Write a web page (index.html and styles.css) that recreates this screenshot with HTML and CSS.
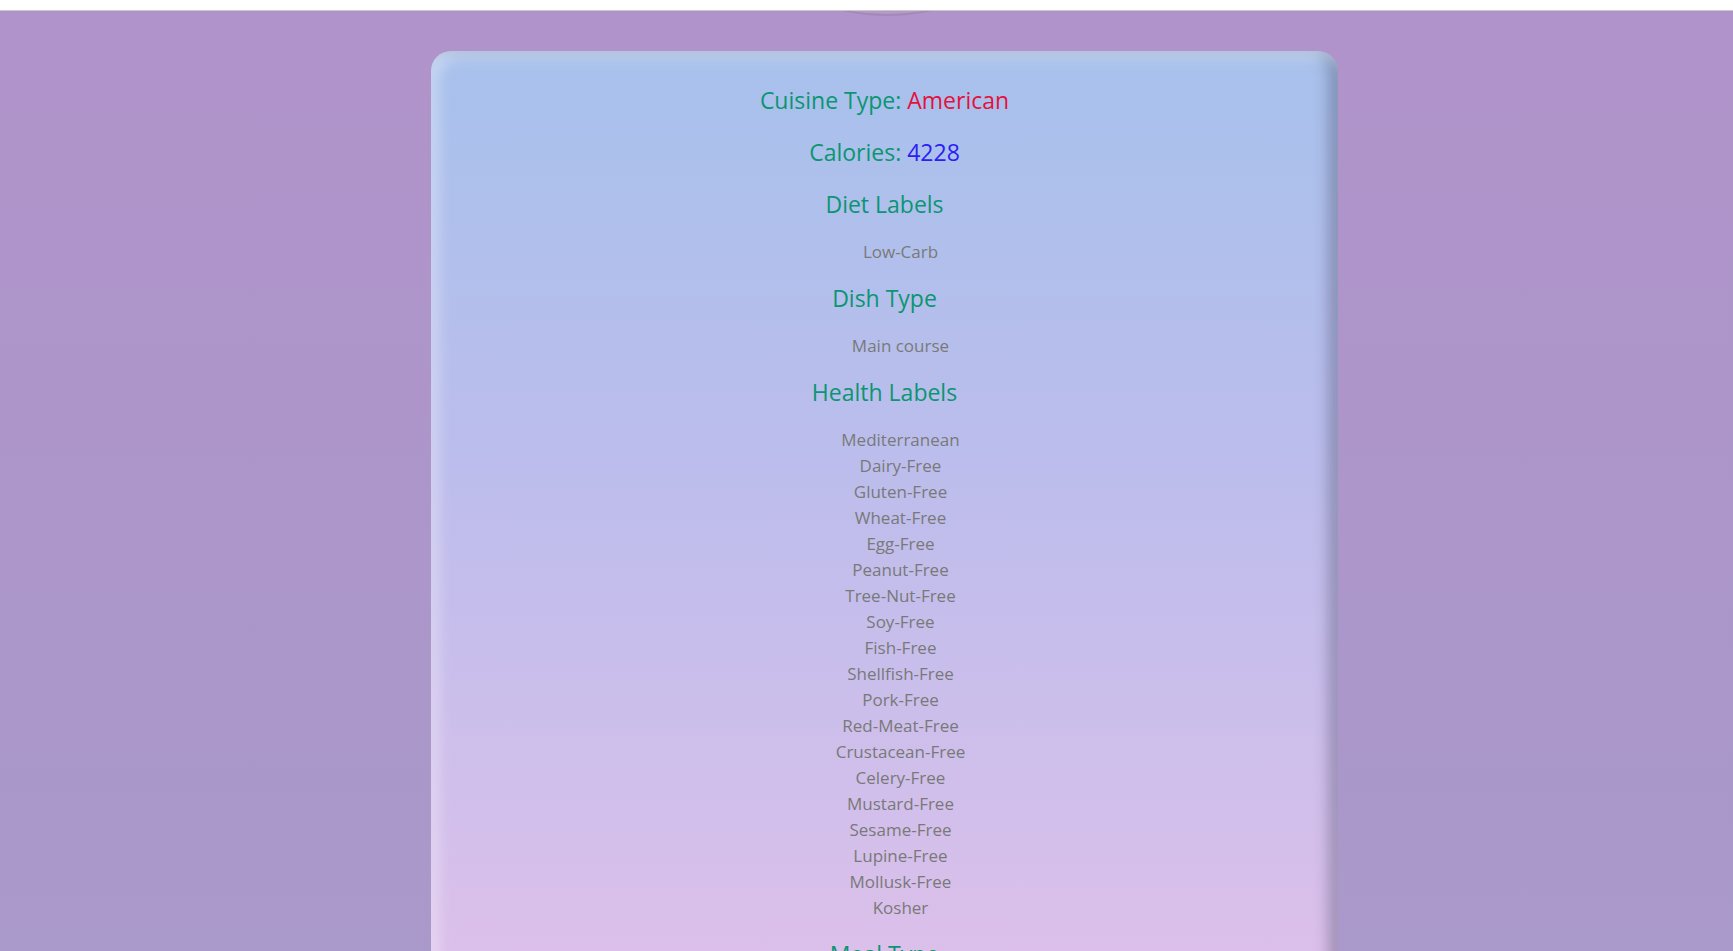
FILE: index.html
```html
<!DOCTYPE html>
<html lang="en">
<head>
<meta charset="utf-8">
<title>Recipe</title>
<link rel="stylesheet" href="styles.css">
</head>
<body>
  <div class="topbar"></div>
  <main class="page">
    <svg class="peek" width="90" height="8" viewBox="0 0 90 8" aria-hidden="true">
      <path d="M0 0 Q45 10 90 0 Z" fill="#9a7fae" opacity="0.55"/>
      <path d="M8 0 Q45 6 82 0 Z" fill="#b9a3cf" opacity="0.7"/>
    </svg>
    <section class="card">
      <h2 class="title">Cuisine Type: <span class="red">American</span></h2>
      <h2 class="title">Calories: <span class="blue">4228</span></h2>
      <h2 class="title">Diet Labels</h2>
      <ul class="labels">
        <li>Low-Carb</li>
      </ul>
      <h2 class="title">Dish Type</h2>
      <ul class="labels">
        <li>Main course</li>
      </ul>
      <h2 class="title">Health Labels</h2>
      <ul class="labels">
        <li>Mediterranean</li>
        <li>Dairy-Free</li>
        <li>Gluten-Free</li>
        <li>Wheat-Free</li>
        <li>Egg-Free</li>
        <li>Peanut-Free</li>
        <li>Tree-Nut-Free</li>
        <li>Soy-Free</li>
        <li>Fish-Free</li>
        <li>Shellfish-Free</li>
        <li>Pork-Free</li>
        <li>Red-Meat-Free</li>
        <li>Crustacean-Free</li>
        <li>Celery-Free</li>
        <li>Mustard-Free</li>
        <li>Sesame-Free</li>
        <li>Lupine-Free</li>
        <li>Mollusk-Free</li>
        <li>Kosher</li>
      </ul>
      <h2 class="title">Meal Type</h2>
    </section>
  </main>
</body>
</html>
```
FILE: styles.css
```css
html, body {
  margin: 0;
  padding: 0;
  height: 100%;
}
body {
  font-family: "Open Sans", "Noto Sans", sans-serif;
  background: #ffffff;
  overflow: hidden;
}
.topbar {
  height: 10px;
  background: #ffffff;
  border-bottom: 1px solid #c9c9c9;
}
.page {
  position: relative;
  min-height: 940px;
  background: linear-gradient(180deg, #b093ca 0%, #a999ca 100%);
  display: flex;
  justify-content: center;
  align-items: flex-start;
  padding: 40px 0 0 36px;
  box-sizing: border-box;
}
.peek {
  position: absolute;
  top: 0;
  left: 842px;
}
.card {
  width: 907px;
  height: 960px;
  border-radius: 20px;
  background: linear-gradient(180deg, #a7c1ec 0%, #bdbdec 45%, #dfc0ea 100%);
  box-shadow: inset 8px 8px 14px rgba(255, 255, 255, 0.35),
              inset -10px 0 14px rgba(60, 60, 90, 0.35);
  padding-top: 35px;
  box-sizing: border-box;
  display: flex;
  flex-direction: column;
  align-items: center;
}
.title {
  margin: 0 0 24px;
  font-size: 23px;
  font-weight: 400;
  line-height: 28px;
  color: #0b9572;
}
.red { color: #e3113e; }
.blue { color: #2b20f2; }
.labels {
  list-style: none;
  margin: -3px 0 19px;
  padding: 0 0 0 32px;
  display: flex;
  flex-direction: column;
  align-items: center;
}
.labels li {
  font-size: 17px;
  line-height: 26px;
  color: #797979;
}
```
